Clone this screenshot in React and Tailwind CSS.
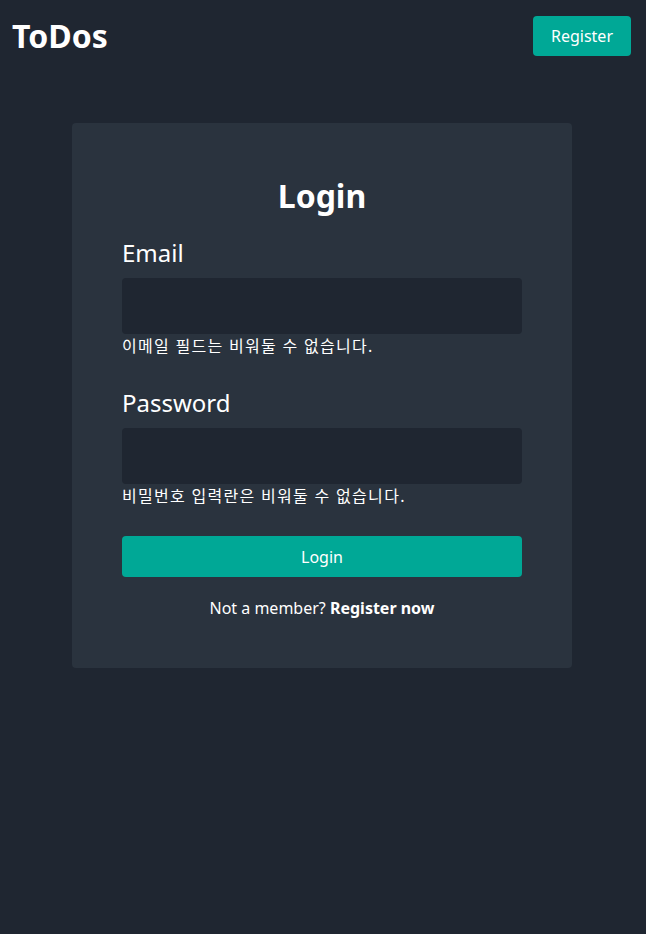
export default function App() {
  const font = { fontFamily: '"Noto Sans", "Noto Sans CJK KR", sans-serif' };
  return (
    <div className="min-h-[934px] bg-[#1f2631] text-white" style={font}>
      <header className="flex items-center justify-between pl-[12px] pr-[15px] pt-[16px]">
        <h1 className="text-[32px] font-bold leading-[40px]">ToDos</h1>
        <button className="h-[40px] w-[98px] rounded-[4px] bg-[#00a896] text-[16px] text-white">Register</button>
      </header>
      <main className="flex justify-center pt-[67px] pr-[2px]">
        <div className="w-[500px] rounded-[4px] bg-[#2a333e] px-[50px] pt-[53px] pb-[48px]">
          <h2 className="text-center text-[32px] font-bold leading-[40px]">Login</h2>
          <div className="mt-[21px]">
            <label className="block text-[24px] leading-[32px]">Email</label>
            <div className="mt-[9px] h-[56px] rounded-[4px] bg-[#1f2631]"></div>
            <p className="text-[16px] leading-[24px] tracking-[1.3px]">이메일 필드는 비워둘 수 없습니다.</p>
          </div>
          <div className="mt-[29px]">
            <label className="block text-[24px] leading-[32px]">Password</label>
            <div className="mt-[9px] h-[56px] rounded-[4px] bg-[#1f2631]"></div>
            <p className="text-[16px] leading-[24px] tracking-[1.3px]">비밀번호 입력란은 비워둘 수 없습니다.</p>
          </div>
          <button className="mt-[28px] h-[41px] w-full rounded-[4px] bg-[#00a896] text-[16px] text-white">Login</button>
          <p className="mt-[19px] text-center text-[16px] leading-[24px]">
            Not a member? <span className="font-bold">Register now</span>
          </p>
        </div>
      </main>
    </div>
  );
}
